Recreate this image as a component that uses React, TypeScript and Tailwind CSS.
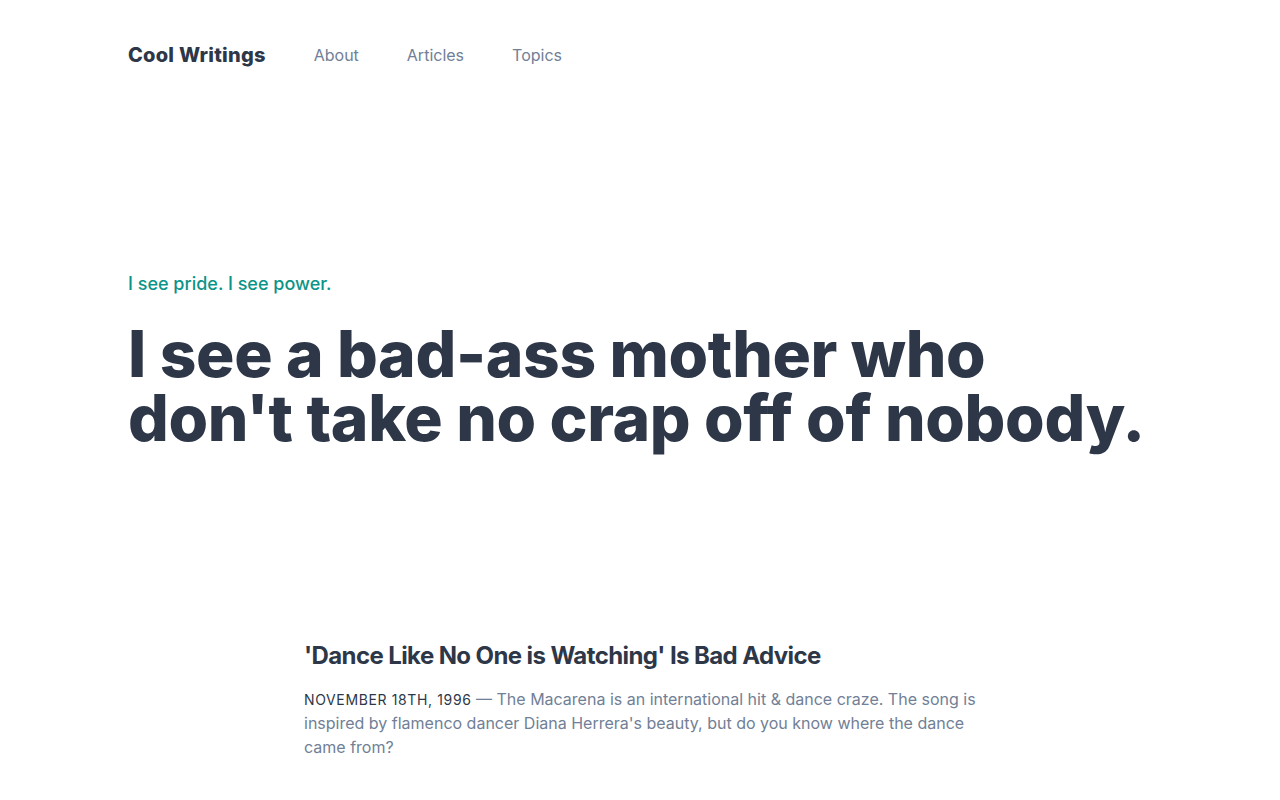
export default function App() {
  return (
    <div className="min-h-screen bg-white text-[#2d3748] font-['Inter',sans-serif] antialiased">
      {/* Header */}
      <header className="max-w-[1024px] mx-auto pt-[41px] flex items-center">
        <a href="#" className="text-xl font-extrabold tracking-[0.012em] text-[#2d3748]">
          Cool Writings
        </a>
        <nav className="flex items-center">
          <a href="#" className="ml-12 text-base text-[#718096]">About</a>
          <a href="#" className="ml-12 text-base text-[#718096]">Articles</a>
          <a href="#" className="ml-12 text-base text-[#718096]">Topics</a>
        </nav>
      </header>

      {/* Hero */}
      <section className="max-w-[1024px] mx-auto pt-[201px]">
        <p className="text-lg font-medium text-[#0d9488]">I see pride. I see power.</p>
        <h1 className="mt-6 text-[64px] leading-none font-extrabold tracking-[-0.005em]">
          I see a bad-ass mother who don't take no crap off of nobody.
        </h1>
      </section>

      {/* Articles */}
      <section className="max-w-2xl mx-auto pt-[190px]">
        <article>
          <h2 className="text-2xl font-bold tracking-tight">
            'Dance Like No One is Watching' Is Bad Advice
          </h2>
          <p className="mt-[15px] text-base leading-6 text-[#718096]">
            <span className="text-sm uppercase tracking-[0.045em] text-[#2d3748]">November 18th, 1996</span>{" "}
            — The Macarena is an international hit &amp; dance craze. The song is inspired by flamenco
            dancer Diana Herrera's beauty, but do you know where the dance came from?
          </p>
        </article>
      </section>
    </div>
  );
}
